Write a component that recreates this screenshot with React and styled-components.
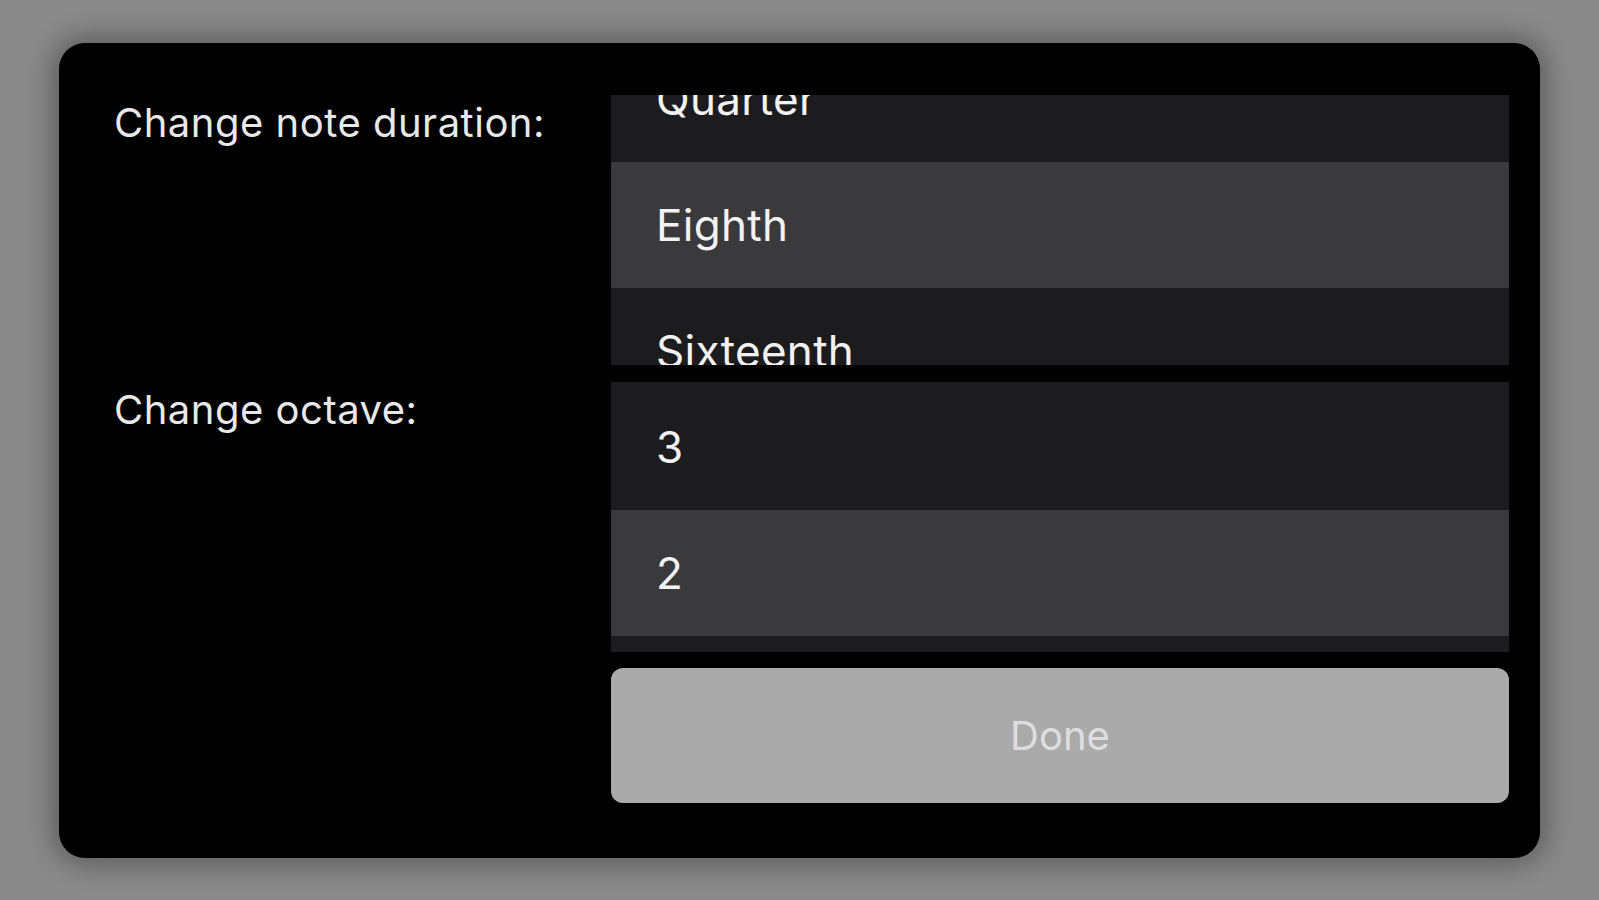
import React from "react"
import styled, {createGlobalStyle} from "styled-components"

const durations = ["Quarter", "Eighth", "Sixteenth", "Thirty-second"]
const octaves = ["4", "3", "2", "1"]

export default function App() {
    return (
        <>
            <GlobalStyle />
            <Page>
                <Dialog>
                    <Label>Change note duration:</Label>
                    <Picker items={durations} selected="Eighth" offset={-59} />
                    <Label>Change octave:</Label>
                    <Picker items={octaves} selected="2" offset={-124} />
                    <Spacer />
                    <DoneButton>Done</DoneButton>
                </Dialog>
            </Page>
        </>
    )
}

function Picker({items, selected, offset}) {
    const options = items.map((item) => (
        <Option key={item} $selected={item === selected}>{item}</Option>
    ))
    return (
        <Wheel>
            <Track $offset={offset}>{options}</Track>
        </Wheel>
    )
}

const GlobalStyle = createGlobalStyle`
    html, body {
        margin: 0;
        padding: 0;
        background: #8a8a8a;
        font-family: 'Inter', 'Liberation Sans', sans-serif;
    }
`

const Page = styled.div`
    width: 1599px;
    height: 900px;
    box-sizing: border-box;
    padding: 43px 59px 0 59px;
`

const Dialog = styled.div`
    width: 1481px;
    height: 815px;
    box-sizing: border-box;
    background: #000000;
    border-radius: 26px;
    box-shadow: 0 0 28px 6px rgba(0, 0, 0, 0.35);
    padding: 52px 31px 55px 55px;
    display: grid;
    grid-template-columns: 497px 898px;
    grid-template-rows: 270px 270px 135px;
    row-gap: 17px;
    align-content: start;

    & > :last-child {
        margin-top: -1px;
    }
`

const Label = styled.div`
    font-size: 40px;
    line-height: 48px;
    letter-spacing: 0.5px;
    color: #e8e8e8;
    padding-top: 4px;
`

const Wheel = styled.div`
    height: 270px;
    overflow: hidden;
    background: #1c1c1e;
`

const Track = styled.div`
    margin-top: ${(p) => p.$offset}px;
    display: flex;
    flex-direction: column;
`

const Option = styled.div`
    height: 126px;
    flex-shrink: 0;
    display: flex;
    align-items: center;
    padding-left: 45px;
    font-size: 44px;
    letter-spacing: 0.3px;
    color: #f2f2f2;
    background: ${(p) => (p.$selected ? "#3a3a3c" : "#1c1c1e")};
`

const Spacer = styled.div``

const DoneButton = styled.button`
    height: 135px;
    border: none;
    border-radius: 12px;
    background: #aaaaaa;
    color: #dedede;
    font-family: 'Inter', 'Liberation Sans', sans-serif;
    font-size: 40px;
    cursor: pointer;
`
